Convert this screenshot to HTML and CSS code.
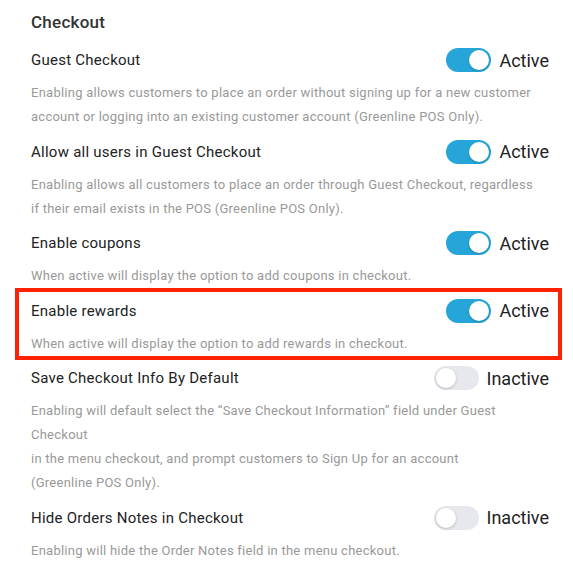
FILE: index.html
```html
<!DOCTYPE html>
<html lang="en">
<head>
    <meta charset="UTF-8">
    <meta name="viewport" content="width=device-width, initial-scale=1.0">
    <title>Checkout Settings</title>
    <link rel="stylesheet" href="styles.css">
</head>
<body>
    <div class="settings">
        <h2 class="settings-title">Checkout</h2>

        <div class="setting">
            <div class="setting-head">
                <span class="setting-label">Guest Checkout</span>
                <div class="switch-wrap">
                    <span class="switch on"><span class="knob"></span></span>
                    <span class="switch-text">Active</span>
                </div>
            </div>
            <p class="setting-desc">Enabling allows customers to place an order without signing up for a new customer account or logging into an existing customer account (Greenline POS Only).</p>
        </div>

        <div class="setting">
            <div class="setting-head">
                <span class="setting-label">Allow all users in Guest Checkout</span>
                <div class="switch-wrap">
                    <span class="switch on"><span class="knob"></span></span>
                    <span class="switch-text">Active</span>
                </div>
            </div>
            <p class="setting-desc">Enabling allows all customers to place an order through Guest Checkout, regardless if their email exists in the POS (Greenline POS Only).</p>
        </div>

        <div class="setting">
            <div class="setting-head">
                <span class="setting-label">Enable coupons</span>
                <div class="switch-wrap">
                    <span class="switch on"><span class="knob"></span></span>
                    <span class="switch-text">Active</span>
                </div>
            </div>
            <p class="setting-desc">When active will display the option to add coupons in checkout.</p>
        </div>

        <div class="setting highlight">
            <div class="setting-head">
                <span class="setting-label">Enable rewards</span>
                <div class="switch-wrap">
                    <span class="switch on"><span class="knob"></span></span>
                    <span class="switch-text">Active</span>
                </div>
            </div>
            <p class="setting-desc">When active will display the option to add rewards in checkout.</p>
        </div>

        <div class="setting">
            <div class="setting-head">
                <span class="setting-label">Save Checkout Info By Default</span>
                <div class="switch-wrap">
                    <span class="switch"><span class="knob"></span></span>
                    <span class="switch-text">Inactive</span>
                </div>
            </div>
            <p class="setting-desc">Enabling will default select the “Save Checkout Information” field under Guest Checkout<br>in the menu checkout, and prompt customers to Sign Up for an account<br>(Greenline POS Only).</p>
        </div>

        <div class="setting">
            <div class="setting-head">
                <span class="setting-label">Hide Orders Notes in Checkout</span>
                <div class="switch-wrap">
                    <span class="switch"><span class="knob"></span></span>
                    <span class="switch-text">Inactive</span>
                </div>
            </div>
            <p class="setting-desc">Enabling will hide the Order Notes field in the menu checkout.</p>
        </div>
    </div>
</body>
</html>
```

FILE: styles.css
```css
body {
    margin: 0;
    padding: 0;
    background: #fff;
    font-family: Roboto, "Liberation Sans", Arial, sans-serif;
    color: #222;
}
.settings {
    width: 518px;
    padding: 10px 0 20px 31px;
}
.settings-title {
    margin: 0 0 11px;
    font-size: 17px;
    font-weight: 500;
    line-height: 24px;
    letter-spacing: 0.25px;
    color: #333;
}
.setting + .setting {
    margin-top: 7.5px;
}
.setting-head {
    display: flex;
    justify-content: space-between;
    align-items: center;
    height: 30px;
}
.setting-label {
    font-size: 15px;
    letter-spacing: 0.25px;
    color: #222;
}
.setting-desc {
    margin: 6px 0 0;
    max-width: 508px;
    font-size: 13px;
    line-height: 24px;
    letter-spacing: 0.25px;
    color: #999;
}
.switch-wrap {
    display: flex;
    align-items: center;
    gap: 8px;
}
.switch {
    position: relative;
    width: 45px;
    height: 24px;
    border-radius: 12px;
    background: #e6e8ee;
}
.switch.on {
    background: #26a6d8;
}
.knob {
    position: absolute;
    top: 2px;
    left: 2px;
    width: 20px;
    height: 20px;
    border-radius: 50%;
    background: #fff;
    box-shadow: 0 1px 3px rgba(0, 0, 0, 0.2);
}
.switch.on .knob {
    left: 23px;
}
.switch-text {
    font-size: 18px;
    color: #222;
}
.setting.highlight {
    margin: 0 -13px 0 -16px;
    padding: 3.5px 9px 0 12px;
    border: 4px solid #fe2200;
}
.setting.highlight + .setting {
    margin-top: 3.5px;
}
```
